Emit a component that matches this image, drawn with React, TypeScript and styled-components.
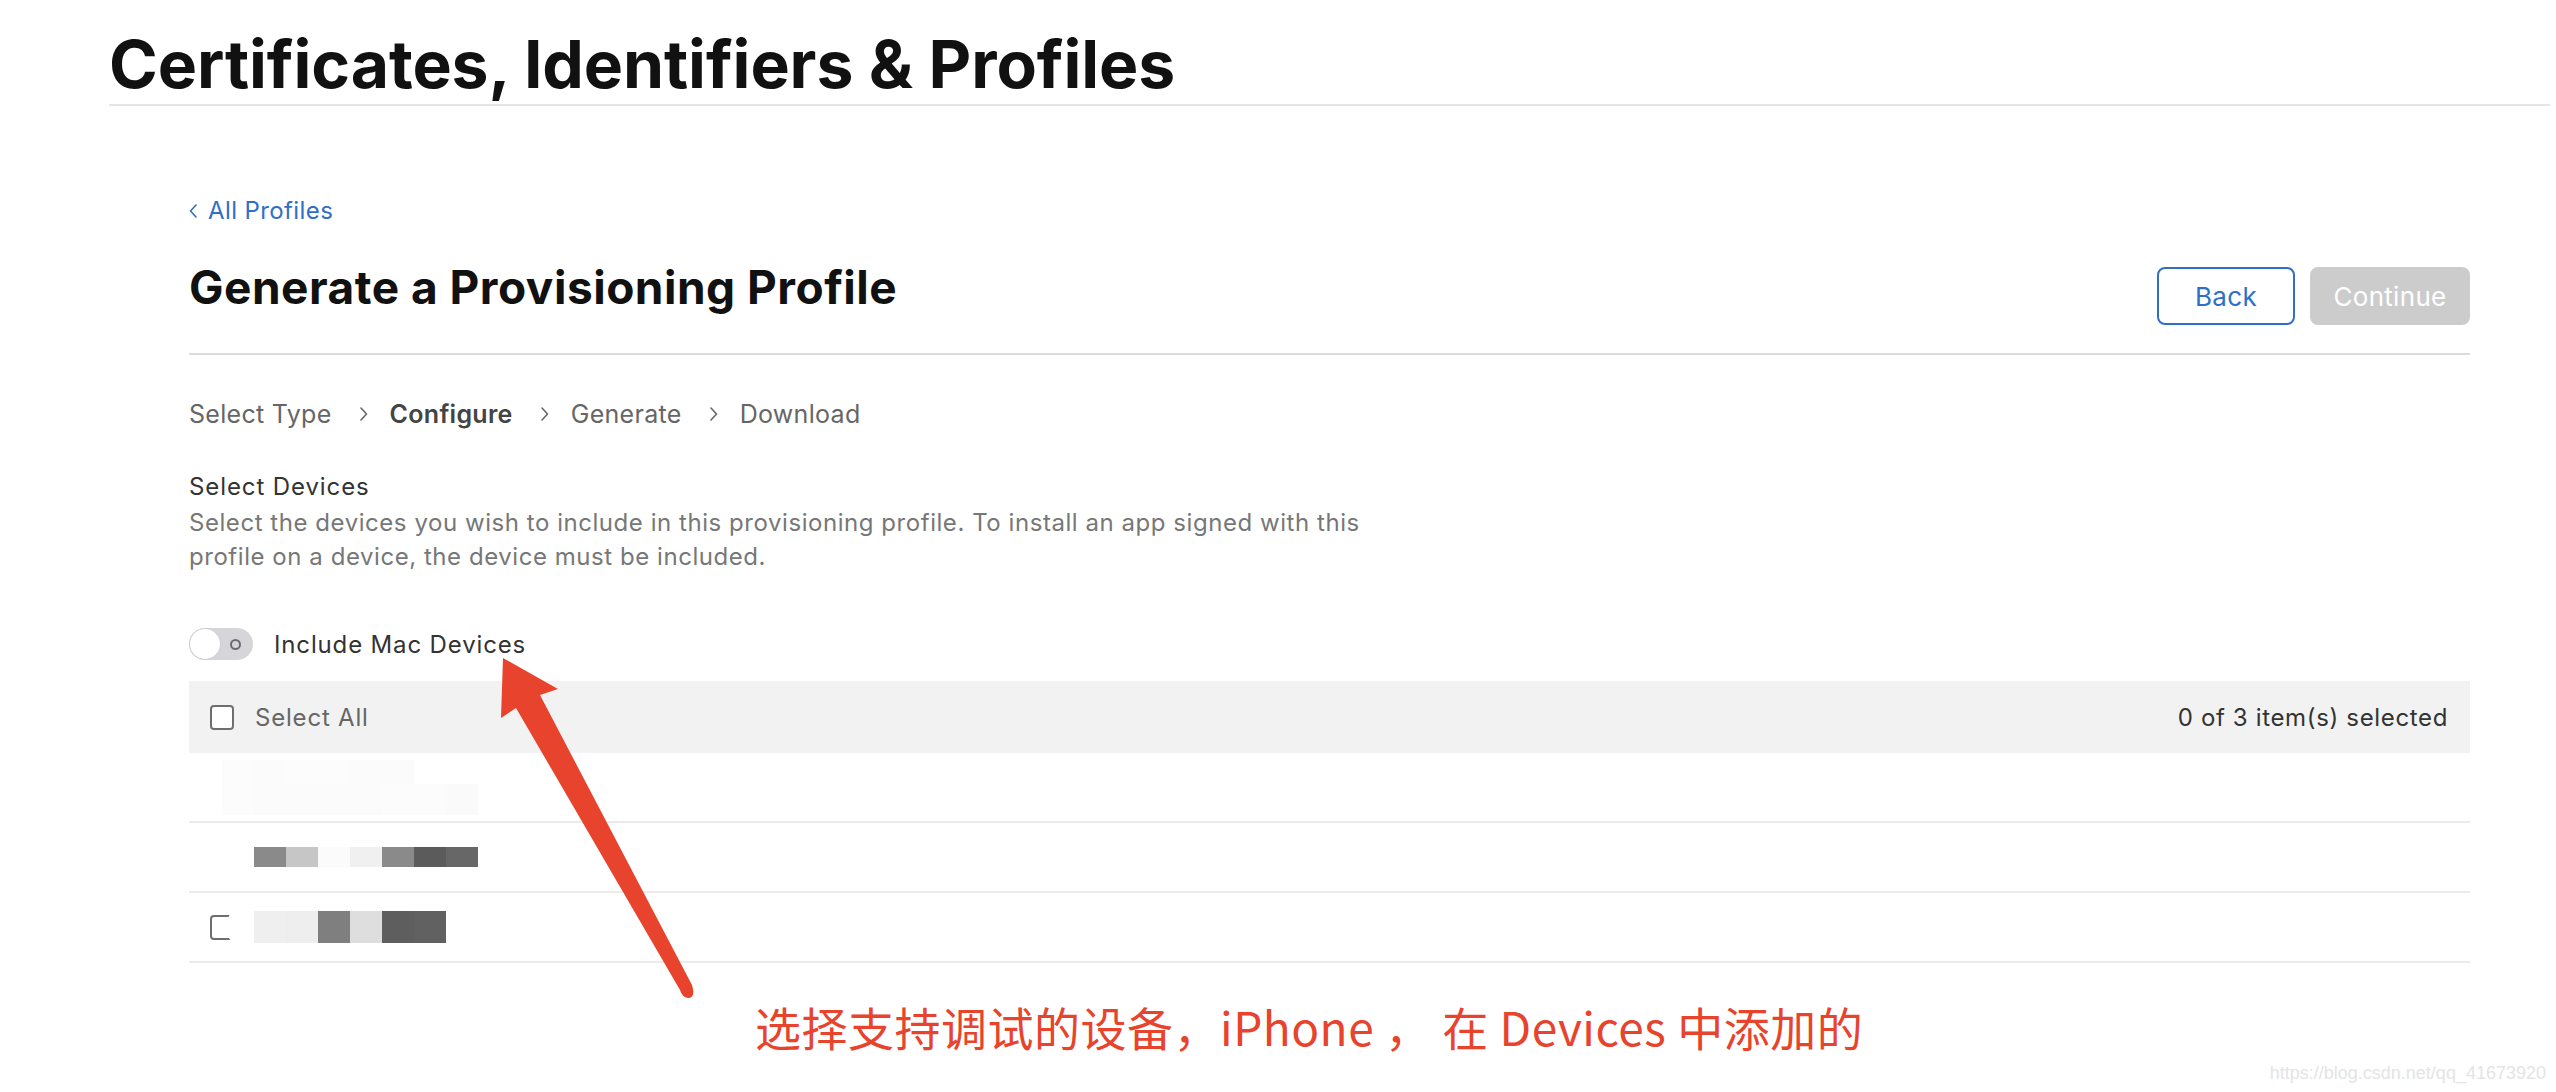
import React from "react";
import styled, { createGlobalStyle } from "styled-components";

const GlobalStyle = createGlobalStyle`
  html, body { margin: 0; padding: 0; background: #ffffff; }
  body { font-family: Inter, "Noto Sans", "Liberation Sans", sans-serif; color: #1d1d1f; }
  * { box-sizing: border-box; }
`;

const Page = styled.div`
  position: relative;
  width: 2556px;
  height: 1092px;
  overflow: hidden;
`;

const Header = styled.header`
  margin-left: 109px;
  margin-right: 6px;
  padding-top: 24px;
  border-bottom: 2px solid #e6e6e6;
`;

const SiteTitle = styled.h1`
  margin: 0;
  font-size: 66px;
  line-height: 80px;
  font-weight: 700;
  letter-spacing: -0.1px;
  color: #111111;
`;

const Content = styled.main`
  margin-left: 189px;
  width: 2281px;
`;

const BackLink = styled.a`
  display: flex;
  align-items: center;
  gap: 11px;
  margin-top: 88px;
  font-size: 24px;
  line-height: 34px;
  letter-spacing: 0.4px;
  color: #2f6fc6;
  text-decoration: none;
`;

const HeadingRow = styled.div`
  display: flex;
  justify-content: space-between;
  align-items: flex-start;
  margin-top: 30px;
  padding-bottom: 28px;
  border-bottom: 2px solid #dcdcdc;
`;

const PageHeading = styled.h2`
  margin: 0;
  font-size: 46px;
  line-height: 58px;
  font-weight: 700;
  letter-spacing: 0.5px;
  color: #111111;
`;

const ButtonGroup = styled.div`
  display: flex;
  gap: 15px;
  padding-top: 9px;
`;

const Button = styled.button<{ $variant: "outline" | "disabled" }>`
  height: 58px;
  width: ${(p) => (p.$variant === "outline" ? "138px" : "160px")};
  border-radius: 8px;
  font-family: Inter, "Liberation Sans", sans-serif;
  font-size: 26px;
  letter-spacing: 0.3px;
  border: 2px solid ${(p) => (p.$variant === "outline" ? "#2f6fc6" : "#cccccc")};
  background: ${(p) => (p.$variant === "outline" ? "#ffffff" : "#cccccc")};
  color: ${(p) => (p.$variant === "outline" ? "#2f6fc6" : "#ffffff")};
  cursor: pointer;
`;

const Steps = styled.nav`
  display: flex;
  align-items: center;
  margin-top: 42px;
  font-size: 25px;
  line-height: 34px;
  letter-spacing: 0.3px;
`;

const Step = styled.span<{ $active?: boolean }>`
  color: ${(p) => (p.$active ? "#444444" : "#666666")};
  font-weight: ${(p) => (p.$active ? 600 : 400)};
`;

const StepChevron = styled.svg`
  margin: 0 22px 0 28px;
  flex: none;
`;

const SectionTitle = styled.h3`
  margin: 39px 0 2px;
  font-size: 24px;
  line-height: 34px;
  font-weight: 400;
  letter-spacing: 0.9px;
  color: #333333;
`;

const Description = styled.p`
  margin: 0;
  font-size: 24px;
  line-height: 34px;
  letter-spacing: 0.55px;
  color: #777777;
`;

const ToggleRow = styled.label`
  display: flex;
  align-items: center;
  gap: 21px;
  margin-top: 54px;
  font-size: 24px;
  letter-spacing: 0.85px;
  color: #333333;
`;

const Track = styled.span`
  position: relative;
  display: flex;
  align-items: center;
  justify-content: flex-end;
  width: 64px;
  height: 32px;
  padding-right: 12px;
  border-radius: 16px;
  background: #d6d6da;
`;

const Knob = styled.span`
  position: absolute;
  left: 1px;
  top: 1px;
  width: 30px;
  height: 30px;
  border-radius: 50%;
  background: #ffffff;
  box-shadow: 0 0 0 1px #d0d0d4;
`;

const OffRing = styled.span`
  width: 11px;
  height: 11px;
  border-radius: 50%;
  border: 2px solid #6c6c70;
`;

const Table = styled.div`
  margin-top: 21px;
`;

const TableHeader = styled.div`
  display: flex;
  align-items: center;
  justify-content: space-between;
  height: 72px;
  padding: 0 22px 0 21px;
  background: #f2f2f2;
  font-size: 24px;
`;

const HeaderLeft = styled.div`
  display: flex;
  align-items: center;
  gap: 21px;
  letter-spacing: 0.8px;
  color: #666666;
`;

const Count = styled.span`
  letter-spacing: 0.65px;
  color: #333333;
`;

const Checkbox = styled.span`
  display: block;
  flex: none;
  width: 24px;
  height: 25px;
  border: 2px solid #6e6e6e;
  border-radius: 4px;
  background: #ffffff;
`;

const Row = styled.div<{ $pad: number }>`
  display: flex;
  align-items: center;
  height: 70px;
  padding-left: ${(p) => p.$pad}px;
  border-bottom: 2px solid #ebebeb;
`;

const Smudge = styled.div<{ $overlap: number }>`
  position: relative;
  margin-left: ${(p) => -p.$overlap}px;
  padding: 6px 20px 6px ${(p) => p.$overlap + 20}px;
  border-radius: 22px;
  background: #ffffff;
`;

const Mosaic = styled.div`
  display: flex;
  flex-direction: column;
`;

const MosaicLine = styled.div`
  display: flex;
`;

const Cell = styled.span<{ $h: number }>`
  display: block;
  width: 32px;
  height: ${(p) => p.$h}px;
`;

const Annotation = styled.p`
  margin: 33px 0 0;
  padding-left: 566px;
  font-family: "Noto Sans CJK SC", "Noto Sans", sans-serif;
  font-size: 46px;
  line-height: 60px;
  letter-spacing: 0.5px;
  color: #e8432c;
  white-space: nowrap;
`;

const ArrowMark = styled.svg`
  position: absolute;
  left: 495px;
  top: 650px;
  pointer-events: none;
`;

const Watermark = styled.span`
  position: absolute;
  right: 10px;
  bottom: 8px;
  font-family: "Liberation Sans", Arial, sans-serif;
  font-size: 18px;
  color: #e4e4e4;
`;

type MosaicLineSpec = { h: number; colors: string[] };
type RowSpec = { pad: number; checkbox: boolean; overlap: number; lines: MosaicLineSpec[] };

const rows: RowSpec[] = [
  {
    pad: 13,
    checkbox: false,
    overlap: 0,
    lines: [
      { h: 24, colors: ["#fcfcfc", "#fbfbfb", "#fcfcfc", "#fcfcfc", "#fbfbfb", "#fbfbfb", "#ffffff", "#ffffff"] },
      { h: 31, colors: ["#fcfcfc", "#fbfbfb", "#fbfbfb", "#fbfbfb", "#fbfbfb", "#fcfcfc", "#fcfcfc", "#fafafa"] },
    ],
  },
  {
    pad: 45,
    checkbox: false,
    overlap: 0,
    lines: [{ h: 20, colors: ["#8a8a8a", "#c6c6c6", "#fbfbfb", "#f0f0f0", "#8a8a8a", "#5b5b5b", "#676767"] }],
  },
  {
    pad: 21,
    checkbox: true,
    overlap: 8,
    lines: [{ h: 32, colors: ["#efefef", "#eeeeee", "#7f7f7f", "#dedede", "#5e5e5e", "#616161"] }],
  },
];

const Chevron = ({ dir }: { dir: "left" | "right" }) => (
  <svg width="8" height="14" viewBox="0 0 8 14" aria-hidden>
    <path
      d={dir === "left" ? "M7 1 L1.5 7 L7 13" : "M1 1 L6.5 7 L1 13"}
      fill="none"
      stroke="currentColor"
      strokeWidth="1.6"
      strokeLinecap="round"
      strokeLinejoin="round"
    />
  </svg>
);

const steps = [
  { label: "Select Type", active: false },
  { label: "Configure", active: true },
  { label: "Generate", active: false },
  { label: "Download", active: false },
];

export default function App() {
  return (
    <Page>
      <GlobalStyle />
      <Header>
        <SiteTitle>Certificates, Identifiers &amp; Profiles</SiteTitle>
      </Header>
      <Content>
        <BackLink href="#">
          <Chevron dir="left" />
          All Profiles
        </BackLink>
        <HeadingRow>
          <PageHeading>Generate a Provisioning Profile</PageHeading>
          <ButtonGroup>
            <Button $variant="outline">Back</Button>
            <Button $variant="disabled" disabled>
              Continue
            </Button>
          </ButtonGroup>
        </HeadingRow>
        <Steps>
          {steps.map((s, i) => (
            <React.Fragment key={s.label}>
              {i > 0 && (
                <StepChevron width="8" height="14" viewBox="0 0 8 14" aria-hidden>
                  <path d="M1 1 L6.5 7 L1 13" fill="none" stroke="#666" strokeWidth="1.6" strokeLinecap="round" strokeLinejoin="round" />
                </StepChevron>
              )}
              <Step $active={s.active}>{s.label}</Step>
            </React.Fragment>
          ))}
        </Steps>
        <SectionTitle>Select Devices</SectionTitle>
        <Description>
          Select the devices you wish to include in this provisioning profile. To install an app signed with this
          <br />
          profile on a device, the device must be included.
        </Description>
        <ToggleRow>
          <Track>
            <Knob />
            <OffRing />
          </Track>
          Include Mac Devices
        </ToggleRow>
        <Table>
          <TableHeader>
            <HeaderLeft>
              <Checkbox />
              Select All
            </HeaderLeft>
            <Count>0 of 3 item(s) selected</Count>
          </TableHeader>
          {rows.map((r, i) => (
            <Row key={i} $pad={r.pad}>
              {r.checkbox && <Checkbox />}
              <Smudge $overlap={r.overlap}>
                <Mosaic>
                  {r.lines.map((l, j) => (
                    <MosaicLine key={j}>
                      {l.colors.map((c, k) => (
                        <Cell key={k} $h={l.h} style={{ background: c }} />
                      ))}
                    </MosaicLine>
                  ))}
                </Mosaic>
              </Smudge>
            </Row>
          ))}
        </Table>
        <Annotation>选择支持调试的设备，iPhone ， 在 Devices 中添加的</Annotation>
      </Content>
      <ArrowMark width="210" height="355" viewBox="0 0 210 355" aria-hidden>
        <path
          d="M8 8 L63 39 L45 45 L197 335 Q201 348 193 348 Q187 347 185 340 L21 58 L6 68 Z"
          fill="#e8432c"
        />
      </ArrowMark>
      <Watermark>https://blog.csdn.net/qq_41673920</Watermark>
    </Page>
  );
}
